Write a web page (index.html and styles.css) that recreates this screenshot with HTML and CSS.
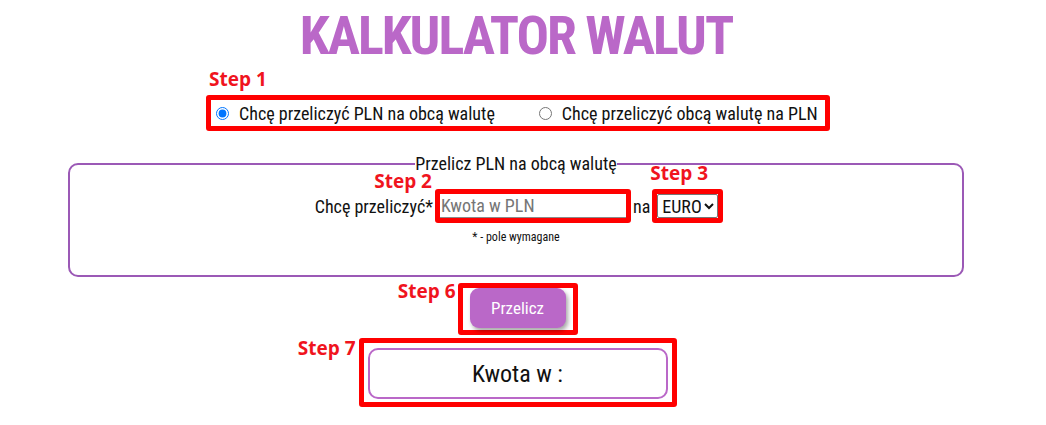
FILE: index.html
```html
<!DOCTYPE html>
<html lang="pl">
<head>
<meta charset="utf-8">
<title>Kalkulator walut</title>
<link rel="stylesheet" href="styles.css">
</head>
<body>
<div class="page">
  <h1 class="title">KALKULATOR WALUT</h1>

  <div class="center">
    <div class="mark mark-radios">
      <span class="step step-1">Step 1</span>
      <label class="radio"><input type="radio" name="dir" checked>Chcę przeliczyć PLN na obcą walutę</label>
      <label class="radio"><input type="radio" name="dir">Chcę przeliczyć obcą walutę na PLN</label>
    </div>
  </div>

  <fieldset class="box">
    <legend>Przelicz PLN na obcą walutę</legend>
    <div class="line">
      <span class="lbl">Chcę przeliczyć*</span>
      <span class="mark mark-input">
        <span class="step step-2">Step 2</span>
        <input class="amount" type="text" placeholder="Kwota w PLN">
      </span>
      <span class="lbl lbl-na">na</span>
      <span class="mark mark-select">
        <span class="step step-3">Step 3</span>
        <select class="cur"><option>EURO</option></select>
      </span>
    </div>
    <p class="note">* - pole wymagane</p>
  </fieldset>

  <div class="center">
    <div class="mark mark-btn">
      <span class="step step-6">Step 6</span>
      <button class="btn" type="button">Przelicz</button>
    </div>
  </div>

  <div class="center">
    <div class="mark mark-result">
      <span class="step step-7">Step 7</span>
      <div class="result">Kwota w :</div>
    </div>
  </div>
</div>
</body>
</html>
```

FILE: styles.css
```css
* { box-sizing: border-box; }
html, body { margin: 0; padding: 0; background: #fff; }
body {
  font-family: "Roboto Condensed", Roboto, "Liberation Sans", sans-serif;
  font-stretch: condensed;
  color: #111;
}
.page { width: 1032px; }
.title {
  margin: 0;
  padding-top: 1px;
  text-align: center;
  font-size: 54px;
  line-height: 70px;
  letter-spacing: -2px;
  font-weight: 700;
  color: #ba68c8;
}
.center { display: flex; justify-content: center; padding-left: 3px; }
.mark {
  position: relative;
  border: 5px solid #f00;
  border-radius: 3px;
}
.step {
  position: absolute;
  font-family: "Open Sans", sans-serif;
  font-stretch: normal;
  font-weight: 700;
  font-size: 19px;
  line-height: 24px;
  color: #f0141e;
  white-space: nowrap;
}
.step-1 { bottom: calc(100% + 9px); left: -2px; }
.step-3 { bottom: calc(100% + 9px); left: -7px; }
.step-2 { bottom: calc(100% + 1px); right: calc(100% + 8px); }
.step-6 { top: -9px; right: calc(100% + 7px); }
.step-7 { top: -7px; right: calc(100% + 8px); }

.mark-radios {
  margin-top: 24px;
  margin-left: 1px;
  width: 624px;
  height: 36px;
  display: flex;
  align-items: center;
  gap: 39px;
}
.radio { font-size: 18px; display: flex; align-items: center; }
.radio input { margin: 0 10px 0 5px; width: 13px; height: 13px; }

.box {
  margin: 22px 68px 0;
  border: 2px solid #9b59b6;
  border-radius: 10px;
  padding: 0;
  height: 124px;
  min-width: 0;
}
.box legend {
  margin: 0 auto;
  padding: 0;
  font-size: 18px;
  line-height: 22px;
}
.line {
  display: flex;
  justify-content: center;
  align-items: center;
  margin-top: 14px;
  padding-left: 6px;
  font-size: 18px;
}
.mark-input { width: 196px; height: 34px; margin-left: 2px; }
.amount {
  display: block;
  width: 100%;
  height: 100%;
  border: none;
  border-bottom: 1px solid #8a8a8a;
  font-family: inherit;
  font-stretch: condensed;
  font-size: 18px;
  padding: 0 1px;
  outline: none;
  background: #fff;
}
.amount::placeholder { color: #767676; }
.lbl-na { margin-left: 2px; }
.mark-select { width: 71px; height: 34px; margin-left: 2px; }
.cur {
  display: block;
  width: 100%;
  height: 24px;
  font-family: inherit;
  font-stretch: condensed;
  font-size: 18px;
  border: 1px solid #767676;
  border-radius: 2px;
  background: #fff;
  color: #111;
  padding: 0;
}
.note {
  margin: 8px 0 0;
  text-align: center;
  font-size: 12px;
  line-height: 13px;
}

.mark-btn {
  margin-top: 6px;
  width: 120px;
  height: 52px;
  padding: 0 7px 2px;
}
.btn {
  display: block;
  width: 96px;
  height: 40px;
  border: none;
  border-radius: 9px;
  background: #ba68c8;
  color: #fff;
  font-family: inherit;
  font-stretch: condensed;
  font-weight: 400;
  font-size: 17px;
  box-shadow: 2px 3px 4px rgba(0,0,0,0.35);
}
.mark-result {
  margin-top: 3px;
  width: 318px;
  height: 69px;
  padding: 5px 4px 3px;
}
.result {
  height: 51px;
  border: 2px solid #ba68c8;
  border-radius: 10px;
  display: flex;
  align-items: center;
  justify-content: center;
  font-size: 24px;
}
```
